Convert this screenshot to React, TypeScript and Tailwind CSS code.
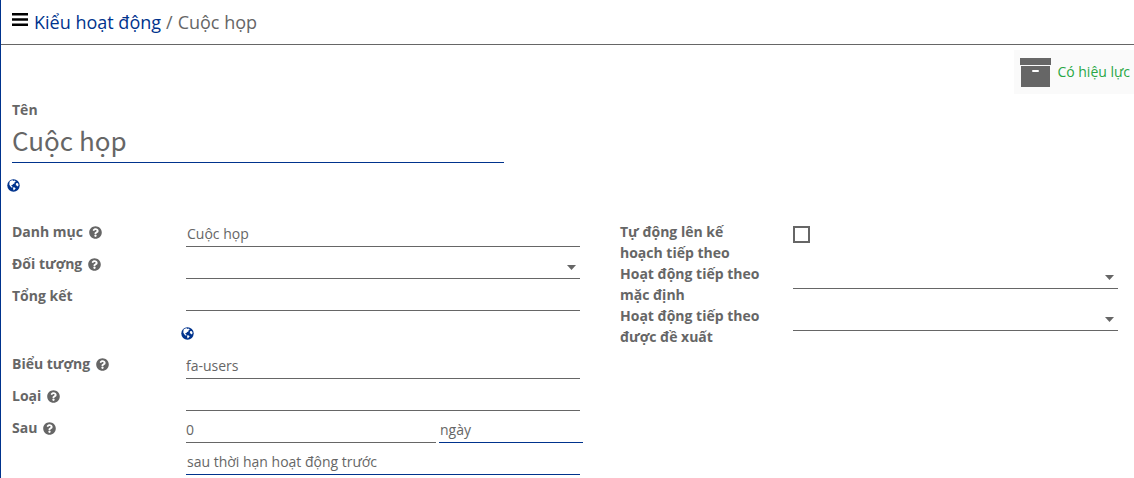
import type { ReactNode } from 'react';
import { FaQuestionCircle } from 'react-icons/fa';
import { clsx } from 'clsx';

const control =
  'block w-full h-[26px] appearance-none rounded-none border-b bg-transparent text-sm outline-none';

function Caret() {
  return (
    <svg
      className="pointer-events-none absolute right-1 top-3"
      width="9"
      height="5"
      viewBox="0 0 9 5"
      fill="currentColor"
      aria-hidden="true"
    >
      <path d="M0 0h9L4.5 5z" />
    </svg>
  );
}

interface FieldProps {
  id: string;
  label: string;
  help?: boolean;
  tall?: boolean;
  children: ReactNode;
}

function Field({ id, label, help, tall, children }: FieldProps) {
  return (
    <div className={clsx('flex', tall ? 'min-h-[42px]' : 'min-h-8')}>
      <label
        htmlFor={id}
        className={clsx('shrink-0 text-sm/[21px] font-bold', tall ? 'w-[173px] pr-6' : 'w-[174px]')}
      >
        {label}
        {help && <FaQuestionCircle className="ml-[6px] inline size-[13px] align-[-2px]" />}
      </label>
      <div className="relative min-w-0 flex-1">{children}</div>
    </div>
  );
}

interface SelectProps {
  id: string;
  options: string[];
  label?: string;
  required?: boolean;
  caret?: boolean;
}

function Select({ id, options, label, required, caret }: SelectProps) {
  return (
    <>
      <select
        id={id}
        aria-label={label}
        defaultValue={options[0]}
        className={clsx(control, 'pl-px', required ? 'border-[#00338d]' : 'border-[#666666]')}
      >
        {options.map((option) => (
          <option key={option}>{option}</option>
        ))}
      </select>
      {caret && <Caret />}
    </>
  );
}

function TranslateButton() {
  return (
    <button type="button" aria-label="Dịch" className="-ml-[5px] block text-[#00338d]">
      <svg width="13" height="13" viewBox="0 0 13 13" aria-hidden="true">
        <circle cx="6.5" cy="6.5" r="6.2" fill="currentColor" />
        <path
          d="M2.6 2.6 4.2 1.5l1.6-.3.8.8 1.2-.5 1 .9-1.2.8-.2 1.2-1.3.7-.7 1-1.2.1.3.9.9.4.1.9-1.1.2-1.3-1.6-.8-1.6z"
          fill="white"
        />
        <path d="M6.2 8.2l1.5.3 1 .7-1 1.2-.9 1.2-.7-1.500z" fill="white" />
        <path d="M9 4.300l1.500-.4.9 1.200.1 1.500-1 .8-.9-.8-.8-.3z" fill="white" />
      </svg>
    </button>
  );
}

export default function App() {
  return (
    <div className="min-h-screen border-l border-[#00338d] bg-white font-['Open_Sans',sans-serif] text-[#666666]">
      <header className="flex h-[45px] items-center gap-[6px] border-b border-[#666666] pl-[11px]">
        <button type="button" aria-label="Menu" className="pb-[5px] text-black">
          <svg width="16" height="13" viewBox="0 0 16 13" fill="currentColor">
            <path d="M0 0h16v2.5H0zM0 5.2h16v2.5H0zM0 10.5h16v2.5H0z" />
          </svg>
        </button>
        <nav className="flex gap-[5px] text-lg">
          <a href="#" className="text-[#00338d]">
            Kiểu hoạt động
          </a>
          <span>/</span>
          <span>Cuộc họp</span>
        </nav>
      </header>

      <div className="mt-[5px] flex justify-end">
        <button
          type="button"
          className="flex h-11 items-center gap-[6px] bg-[#fafafa] pl-[6px] pr-1 text-sm text-[#28a745]"
        >
          <svg width="31" height="29" viewBox="0 0 31 29" className="text-[#666666]" aria-hidden="true">
            <path d="M0 0h31v7H0zM1 8h29v21H1z" fill="currentColor" />
            <rect x="12" y="12" width="7" height="2" rx="1" fill="white" />
          </svg>
          Có hiệu lực
        </button>
      </div>

      <main className="pl-[11px] pr-4">
        <div className="pt-[5px]">
          <label htmlFor="name" className="block text-sm/[21px] font-bold">
            Tên
          </label>
          <input
            id="name"
            defaultValue="Cuộc họp"
            className="block h-[43px] w-4/9 border-b border-[#00338d] bg-transparent pb-1 font-['Noto_Sans_CJK_SC',sans-serif] text-[26px] outline-none"
          />
        </div>
        <div className="mt-4">
          <TranslateButton />
        </div>

        <div className="mt-[29px] grid grid-cols-[568fr_498fr] gap-10">
          <div>
            <Field id="category" label="Danh mục" help>
              <Select id="category" options={['Cuộc họp']} />
            </Field>
            <Field id="model" label="Đối tượng" help>
              <Select id="model" options={['']} caret />
            </Field>
            <Field id="summary" label="Tổng kết">
              <input id="summary" className={clsx(control, 'border-[#666666]')} />
              <div className="pb-[13px] pt-4">
                <TranslateButton />
              </div>
            </Field>
            <Field id="icon" label="Biểu tượng" help>
              <input
                id="icon"
                defaultValue="fa-users"
                className={clsx(control, 'border-[#666666]')}
              />
            </Field>
            <Field id="type" label="Loại" help>
              <Select id="type" options={['']} />
            </Field>
            <Field id="delay" label="Sau" help>
              <div className="-mr-[3px] mb-[6px] flex gap-[3px]">
                <div className="flex-[250]">
                  <input
                    id="delay"
                    defaultValue="0"
                    className={clsx(control, 'border-[#666666]')}
                  />
                </div>
                <div className="flex-[144]">
                  <Select id="unit" label="Đơn vị" options={['ngày']} required />
                </div>
              </div>
              <Select id="from" label="Tính từ" options={['sau thời hạn hoạt động trước']} required />
            </Field>
          </div>

          <div>
            <Field id="auto" label="Tự động lên kế hoạch tiếp theo" tall>
              <input
                id="auto"
                type="checkbox"
                className="mt-[5px] block size-[17px] appearance-none border-2 border-[#666666]"
              />
            </Field>
            <Field id="default-next" label="Hoạt động tiếp theo mặc định" tall>
              <Select id="default-next" options={['']} caret />
            </Field>
            <Field id="suggested-next" label="Hoạt động tiếp theo được đề xuất" tall>
              <Select id="suggested-next" options={['']} caret />
            </Field>
          </div>
        </div>
      </main>
    </div>
  );
}
